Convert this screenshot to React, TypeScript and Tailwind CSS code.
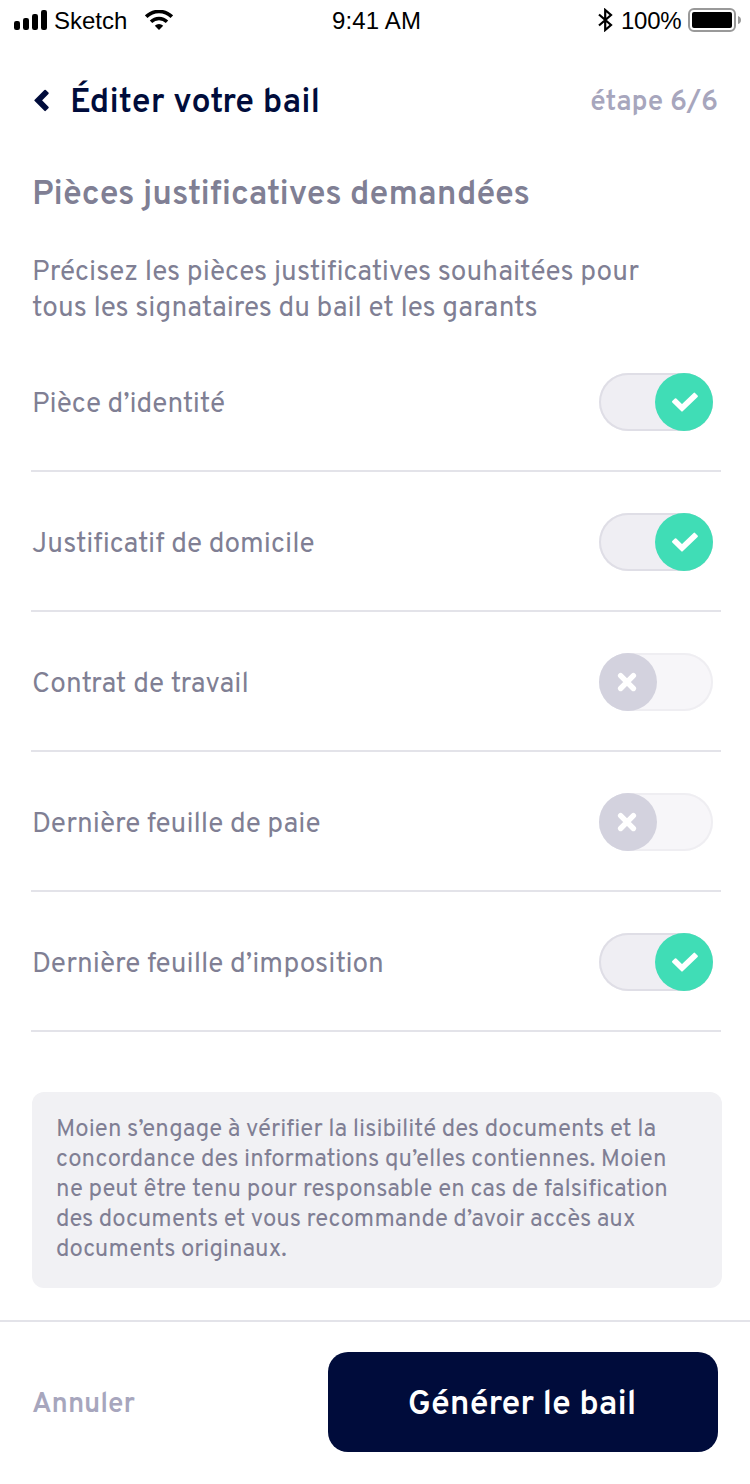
const rows = [
  { label: 'Pièce d’identité', on: true, spacing: 'tracking-[-0.04px]' },
  { label: 'Justificatif de domicile', on: true, spacing: 'tracking-[0.05px]' },
  { label: 'Contrat de travail', on: false, spacing: 'tracking-[0.1px]' },
  { label: 'Dernière feuille de paie', on: false, spacing: 'tracking-[0.02px]' },
  { label: 'Dernière feuille d’imposition', on: true, spacing: 'tracking-[0.03px]' },
];

function StatusBar() {
  return (
    <div className="flex h-10 items-center justify-between pl-[14px] pr-[9px] font-['Liberation_Sans',sans-serif] text-[24px] leading-[38px] text-black">
      <div className="flex w-[240px] items-center">
        <svg width="33" height="20" viewBox="0 0 33 20" className="shrink-0">
          <rect x="0" y="11" width="6" height="9" rx="2.2" />
          <rect x="9" y="8" width="6" height="12" rx="2.2" />
          <rect x="18" y="4" width="6" height="16" rx="2.2" />
          <rect x="27" y="0" width="6" height="20" rx="2.2" />
        </svg>
        <span className="ml-[7px] w-[74px] whitespace-nowrap pt-[2px]">Sketch</span>
        <svg width="28" height="20" viewBox="0 0 28 20" className="ml-[17px] shrink-0">
          <path d="M1.2 6.7a18.2 18.2 0 0 1 25.6 0" fill="none" stroke="#000" strokeWidth="3.6" />
          <path d="M6 11.8a11.3 11.3 0 0 1 16 0" fill="none" stroke="#000" strokeWidth="3.4" />
          <path d="M9.8 15.8a6 6 0 0 1 8.4 0L14 20z" />
        </svg>
      </div>
      <span className="mr-[2px] whitespace-nowrap pt-[2px] tracking-[0.15px]">9:41 AM</span>
      <div className="flex w-[240px] items-center justify-end">
        <svg width="15" height="24" viewBox="0 0 15 24" className="shrink-0">
          <path d="M1 6.5 13 17 7.2 22V2L13 7 1 17.5" fill="none" stroke="#000" strokeWidth="2.2" />
        </svg>
        <span className="ml-[8px] w-[60px] whitespace-nowrap pt-[2px] tracking-[-0.25px]">100%</span>
        <svg width="53" height="24" viewBox="0 0 53 24" className="ml-[7px] shrink-0">
          <rect x="1" y="1" width="46" height="22" rx="5" fill="#fff" stroke="#999" strokeWidth="2" />
          <rect x="4" y="4" width="40" height="16" rx="2" />
          <path d="M50 8q3 1 3 4t-3 4z" fill="#999" />
        </svg>
      </div>
    </div>
  );
}

function Toggle({ on }: { on: boolean }) {
  return on ? (
    <div className="flex h-[58px] w-[114px] justify-end rounded-full bg-[#efeef3] shadow-[inset_0_0_0_2px_#dfdee6]">
      <div className="h-[58px] w-[58px] rounded-full bg-[#40ddb6]">
        <svg width="58" height="58" viewBox="0 0 58 58">
          <path d="M18 28.8 20.6 26.2 27 32.4 39.3 20.6 41.9 23.2 27 37.6z" fill="#fff" stroke="#fff" strokeWidth="2" strokeLinejoin="round" />
        </svg>
      </div>
    </div>
  ) : (
    <div className="flex h-[58px] w-[114px] rounded-full bg-[#f7f6f9] shadow-[inset_0_0_0_2px_#efeef2]">
      <div className="h-[58px] w-[58px] rounded-full bg-[#d3d2de]">
        <svg width="58" height="58" viewBox="0 0 58 58">
          <path d="m21.6 22.7 12.8 12.8m0-12.8-12.8 12.8" fill="none" stroke="#fff" strokeWidth="5.4" strokeLinecap="round" />
        </svg>
      </div>
    </div>
  );
}

export default function App() {
  return (
    <div className="flex h-[1484px] w-[750px] flex-col bg-white font-['Overpass','Roboto',sans-serif] text-[#807f94]">
      <StatusBar />
      <header className="flex h-[120px] items-center justify-between pl-[33px] pr-8">
        <div className="flex items-center">
          <svg width="16" height="24" viewBox="0 0 16 24">
            <path d="M2.4 12.4 12.1 2.7 14.7 5.3 7.8 12.4 14.7 19.5 12.1 22.1z" fill="#000c3b" stroke="#000c3b" strokeWidth="2" strokeLinejoin="round" />
          </svg>
          <h1 className="ml-[21px] whitespace-nowrap pt-[8px] text-[34px] leading-10 font-semibold tracking-[0.1px] text-[#000c3b]">Éditer votre bail</h1>
        </div>
        <span className="whitespace-nowrap pt-[6px] text-[28px] leading-10 font-semibold tracking-[-0.1px] text-[#a7a6bd]">étape 6/6</span>
      </header>
      <div className="flex h-[172px] flex-col pl-8 pt-[16px]">
        <h2 className="whitespace-nowrap text-[34px] leading-10 font-semibold tracking-[0.01px]">Pièces justificatives demandées</h2>
        <p className="mt-[39px] whitespace-nowrap text-[28px] leading-9">
          <span className="block tracking-[0.05px]">Précisez les pièces justificatives souhaitées pour</span>
          <span className="block">tous les signataires du bail et les garants</span>
        </p>
      </div>
      <ul className="ml-[31px] w-[690px]">
        {rows.map((row) => (
          <li key={row.label} className="flex h-[140px] items-center justify-between border-b-2 border-[#e3e3e9] pl-px pr-2 pt-[2px]">
            <span className={`whitespace-nowrap pt-[6px] text-[28px] leading-9 ${row.spacing}`}>{row.label}</span>
            <Toggle on={row.on} />
          </li>
        ))}
      </ul>
      <p className="ml-8 mt-[60px] h-[196px] w-[690px] rounded-xl bg-[#f1f1f4] pl-6 pt-[23px] text-[24px] leading-[30px] whitespace-nowrap">
        <span className="block tracking-[-0.02px]">Moien s’engage à vérifier la lisibilité des documents et la</span>
        <span className="block tracking-[0.03px]">concordance des informations qu’elles contiennes. Moien</span>
        <span className="block tracking-[0.01px]">ne peut être tenu pour responsable en cas de falsification</span>
        <span className="block tracking-[-0.06px]">des documents et vous recommande d’avoir accès aux</span>
        <span className="block tracking-[-0.05px]">documents originaux.</span>
      </p>
      <footer className="mt-8 flex h-[164px] items-center justify-between border-t-2 border-[#e3e3e9] pb-[2px] pl-8 pr-8">
        <button className="whitespace-nowrap pt-[6px] text-[28px] leading-10 font-semibold tracking-[-0.15px] text-[#a7a6bd]">Annuler</button>
        <button className="h-[100px] w-[390px] whitespace-nowrap rounded-[20px] bg-[#000c3b] pr-[2px] pt-[6px] text-[34px] font-semibold text-white">Générer le bail</button>
      </footer>
    </div>
  );
}
